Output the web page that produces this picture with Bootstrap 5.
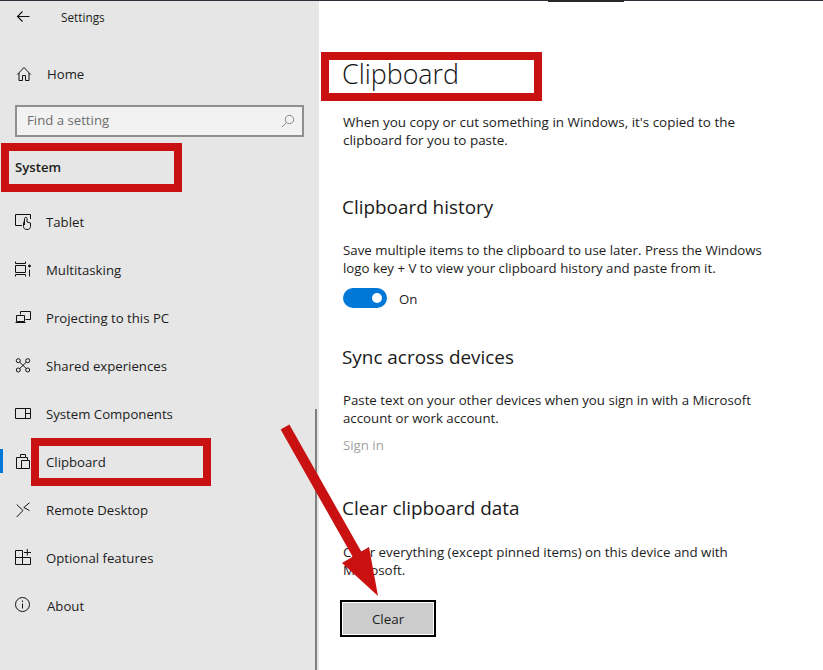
<!DOCTYPE html>
<html lang="en">
<head>
<meta charset="utf-8">
<title>Settings</title>
<link href="https://cdn.jsdelivr.net/npm/bootstrap@5.3.0/dist/css/bootstrap.min.css" rel="stylesheet">
<style>
html,body{margin:0;background:#fff}
body{font-family:"Open Sans","Noto Sans","Liberation Sans",sans-serif;font-size:13.25px;color:#1c1c1c;width:823px;height:670px;overflow:hidden;position:relative}
.win-top{position:absolute;left:0;top:0;width:823px;height:1px;background:#2b3138;z-index:3}
.win-top-seg{position:absolute;left:548px;top:0;width:76px;height:2px;background:#26282b}
.side{width:319px;height:670px;background:#e6e6e6;flex:none;position:relative;font-size:13.2px}
.back-row{height:36px;padding-left:16px}
.back-row svg{margin-top:-3px}
.back-row span{font-size:11.8px;margin-left:31px}
.side-row{height:48px;padding:0 0 0 15px;color:#1c1c1c;gap:13px}
.side-row span{padding-top:2px}
.side-row svg{flex:none;fill:none;stroke:#111;stroke-width:1}
.home-row{margin-top:14px}
.home-row span,.about-row span{margin-left:1px}
.search-box{margin:7px 0 0 15px;width:289px;height:32px;border:2px solid #8f8f8f;background:#f2f2f2;padding:0 7px 0 10px;color:#6d6d6d}
.sys-row{margin-top:6px;height:48px;padding:2px 0 0 15px;font-weight:600}
.first-row{margin-top:7px}
.active-bar{position:absolute;left:0;top:11px;width:3px;height:24px;background:#0078d7}
.scroll-thumb{position:absolute;left:315px;top:409px;width:2px;height:261px;background:#7f7f7f}
.pane{padding:55px 0 0 23px;width:504px}
.pane-title{font-size:26.8px;font-weight:300;line-height:38px;margin:0;color:#111}
.pane-text{line-height:18px;margin:0 0 0 1px;width:450px}
.text-wide{font-size:13.45px}
.text-mid{font-size:13.35px}
.pane-head{font-size:18.9px;font-weight:400;line-height:28px;margin:0;color:#1a1a1a}
.toggle-pill{width:44px;height:20px;border-radius:10px;background:#0078d7;position:relative;flex:none}
.toggle-pill::after{content:"";position:absolute;right:5px;top:5px;width:10px;height:10px;border-radius:50%;background:#fff}
.toggle-row{margin:11px 0 0 1px;gap:12px;height:20px}
.toggle-row span{line-height:20px;padding-top:1px}
.sign-in{line-height:18px;margin:9px 0 0 1px;color:#a3a3a3}
.clear-btn{margin:21px 0 0 -2px;width:96px;height:37px;border:2px solid #000;border-radius:0;background:#ccc;box-shadow:inset 0 0 0 1px #fff;color:#1c1c1c;font-size:13.4px;padding:1px 0 0}
.mt-a{margin-top:20px}.mt-b{margin-top:44px}.mt-c{margin-top:20px}.mt-d{margin-top:35px}.mt-e{margin-top:40px}.mt-f{margin-top:21px}
.mark-box{position:absolute;border:8px solid #c91111;z-index:4}
.mark-sys{left:1px;top:143px;width:181px;height:49px}
.mark-clip{left:31px;top:438px;width:180px;height:48px}
.mark-title{left:321px;top:52px;width:221px;height:49px}
.mark-arrow{position:absolute;left:0;top:0;z-index:5;pointer-events:none}
</style>
</head>
<body>
<div class="win-top"><div class="win-top-seg"></div></div>
<div class="d-flex">
  <aside class="side">
    <div class="back-row d-flex align-items-center">
      <svg width="14" height="14" viewBox="0 0 14 14" fill="none" stroke="#111" stroke-width="1.1"><path d="M1.5 6.5H13.5M6.5 1.5L1.5 6.5L6.5 11.5"/></svg>
      <span>Settings</span>
    </div>
    <nav class="nav flex-column">
      <a class="nav-link side-row home-row d-flex align-items-center" href="#"><svg width="18" height="18" viewBox="0 0 18 18"><path d="M2.3 9.5L9 2.5L15.7 9.5M4 8V15.5H7.5V10.5H10.5V15.5H14V8"/></svg><span>Home</span></a>
      <div class="search-box d-flex align-items-center justify-content-between"><span>Find a setting</span>
        <svg width="14" height="14" viewBox="0 0 14 14" fill="none" stroke="#8a8a8a"><circle cx="8.5" cy="5.5" r="4.2"/><path d="M5.5 8.5L1 13"/></svg></div>
      <div class="sys-row d-flex align-items-center">System</div>
      <a class="nav-link side-row first-row d-flex align-items-center" href="#"><svg width="18" height="18" viewBox="0 0 18 18"><path d="M7 12.5H.5V1.5H15.5V6M8.5 9.5C8.5 8.5 9 8 9.5 9V12M9.5 12V5.5C9.5 4 12 4 12 5.5V9L15.5 10V13.5C15.5 15.5 14 16.5 12 16.5C10 16.5 8.5 15.5 8.5 13.5V10"/></svg><span>Tablet</span></a>
      <a class="nav-link side-row d-flex align-items-center" href="#"><svg width="18" height="18" viewBox="0 0 18 18"><path d="M.5 .5V2.5H10.5V.5M.5 4.5H10.5V11.5H.5ZM.5 15.5V13.5H10.5V15.5M14.5 8.5V15.5"/><circle cx="14.5" cy="5" r="1" fill="#111"/></svg><span>Multitasking</span></a>
      <a class="nav-link side-row d-flex align-items-center" href="#"><svg width="18" height="18" viewBox="0 0 18 18"><path d="M5.5 5.5V2.5H15.5V10.5H10.5M1.5 6.5H9.5V12.5H1.5ZM.5 13.5H10.5"/></svg><span>Projecting to this PC</span></a>
      <a class="nav-link side-row d-flex align-items-center" href="#"><svg width="18" height="18" viewBox="0 0 18 18"><circle cx="3.3" cy="3.7" r="2"/><circle cx="12.7" cy="3.7" r="2"/><circle cx="3.3" cy="13" r="2"/><circle cx="12.7" cy="13" r="2"/><path d="M4.8 5.2L11.2 11.5M11.2 5.2L4.8 11.5"/></svg><span>Shared experiences</span></a>
      <a class="nav-link side-row d-flex align-items-center" href="#"><svg width="18" height="18" viewBox="0 0 18 18"><path d="M.5 3.5H15.5V13.5H.5ZM10.5 3.5V13.5M10.5 8.5H15.5"/></svg><span>System Components</span></a>
      <a class="nav-link side-row position-relative d-flex align-items-center" href="#"><i class="active-bar"></i><svg width="18" height="18" viewBox="0 0 18 18"><path d="M5.5 4.5H1.5V15.5H14.5V7.5H6.5V15.5M5.5 4.5V1.5H10.5V4.5H12.5V7.5M5.5 4.5H10.5"/></svg><span>Clipboard</span></a>
      <a class="nav-link side-row d-flex align-items-center" href="#"><svg width="18" height="18" viewBox="0 0 18 18"><path d="M1.7 3.5L8 9.5L1.7 16M14.5 1.7L8.8 6.5L14.5 9.5"/></svg><span>Remote Desktop</span></a>
      <a class="nav-link side-row d-flex align-items-center" href="#"><svg width="18" height="18" viewBox="0 0 18 18"><path d="M.5 1.5H7.5V15.5H.5ZM.5 8.5H7.5M7.5 15.5H15.5V8.5M7.5 8.5H15.5M12.3 0V6.5M9 3.5H16"/></svg><span>Optional features</span></a>
      <a class="nav-link side-row about-row d-flex align-items-center" href="#"><svg width="18" height="18" viewBox="0 0 18 18"><circle cx="7.5" cy="7.5" r="7"/><path d="M7.5 6.5V11.5M7.5 3.5V5"/></svg><span>About</span></a>
    </nav>
    <div class="scroll-thumb"></div>
  </aside>
  <main class="pane">
    <h1 class="pane-title">Clipboard</h1>
    <p class="pane-text text-wide mt-a">When you copy or cut something in Windows, it's copied to the<br>clipboard for you to paste.</p>
    <h2 class="pane-head mt-b">Clipboard history</h2>
    <p class="pane-text mt-c">Save multiple items to the clipboard to use later. Press the Windows<br>logo key + V to view your clipboard history and paste from it.</p>
    <div class="toggle-row d-flex align-items-center"><div class="toggle-pill"></div><span>On</span></div>
    <h2 class="pane-head mt-d">Sync across devices</h2>
    <p class="pane-text mt-c">Paste text on your other devices when you sign in with a Microsoft<br>account or work account.</p>
    <div class="sign-in">Sign in</div>
    <h2 class="pane-head mt-e">Clear clipboard data</h2>
    <p class="pane-text text-mid mt-f">Clear everything (except pinned items) on this device and with<br>Microsoft.</p>
    <button class="btn clear-btn" type="button">Clear</button>
  </main>
</div>
<div class="mark-box mark-sys"></div>
<div class="mark-box mark-clip"></div>
<div class="mark-box mark-title"></div>
<svg class="mark-arrow" width="823" height="670" viewBox="0 0 823 670"><path d="M285 427L358 556" stroke="#c91111" stroke-width="10" fill="none"/><path d="M342 563L369 547L378 596Z" fill="#c91111"/></svg>
</body>
</html>
